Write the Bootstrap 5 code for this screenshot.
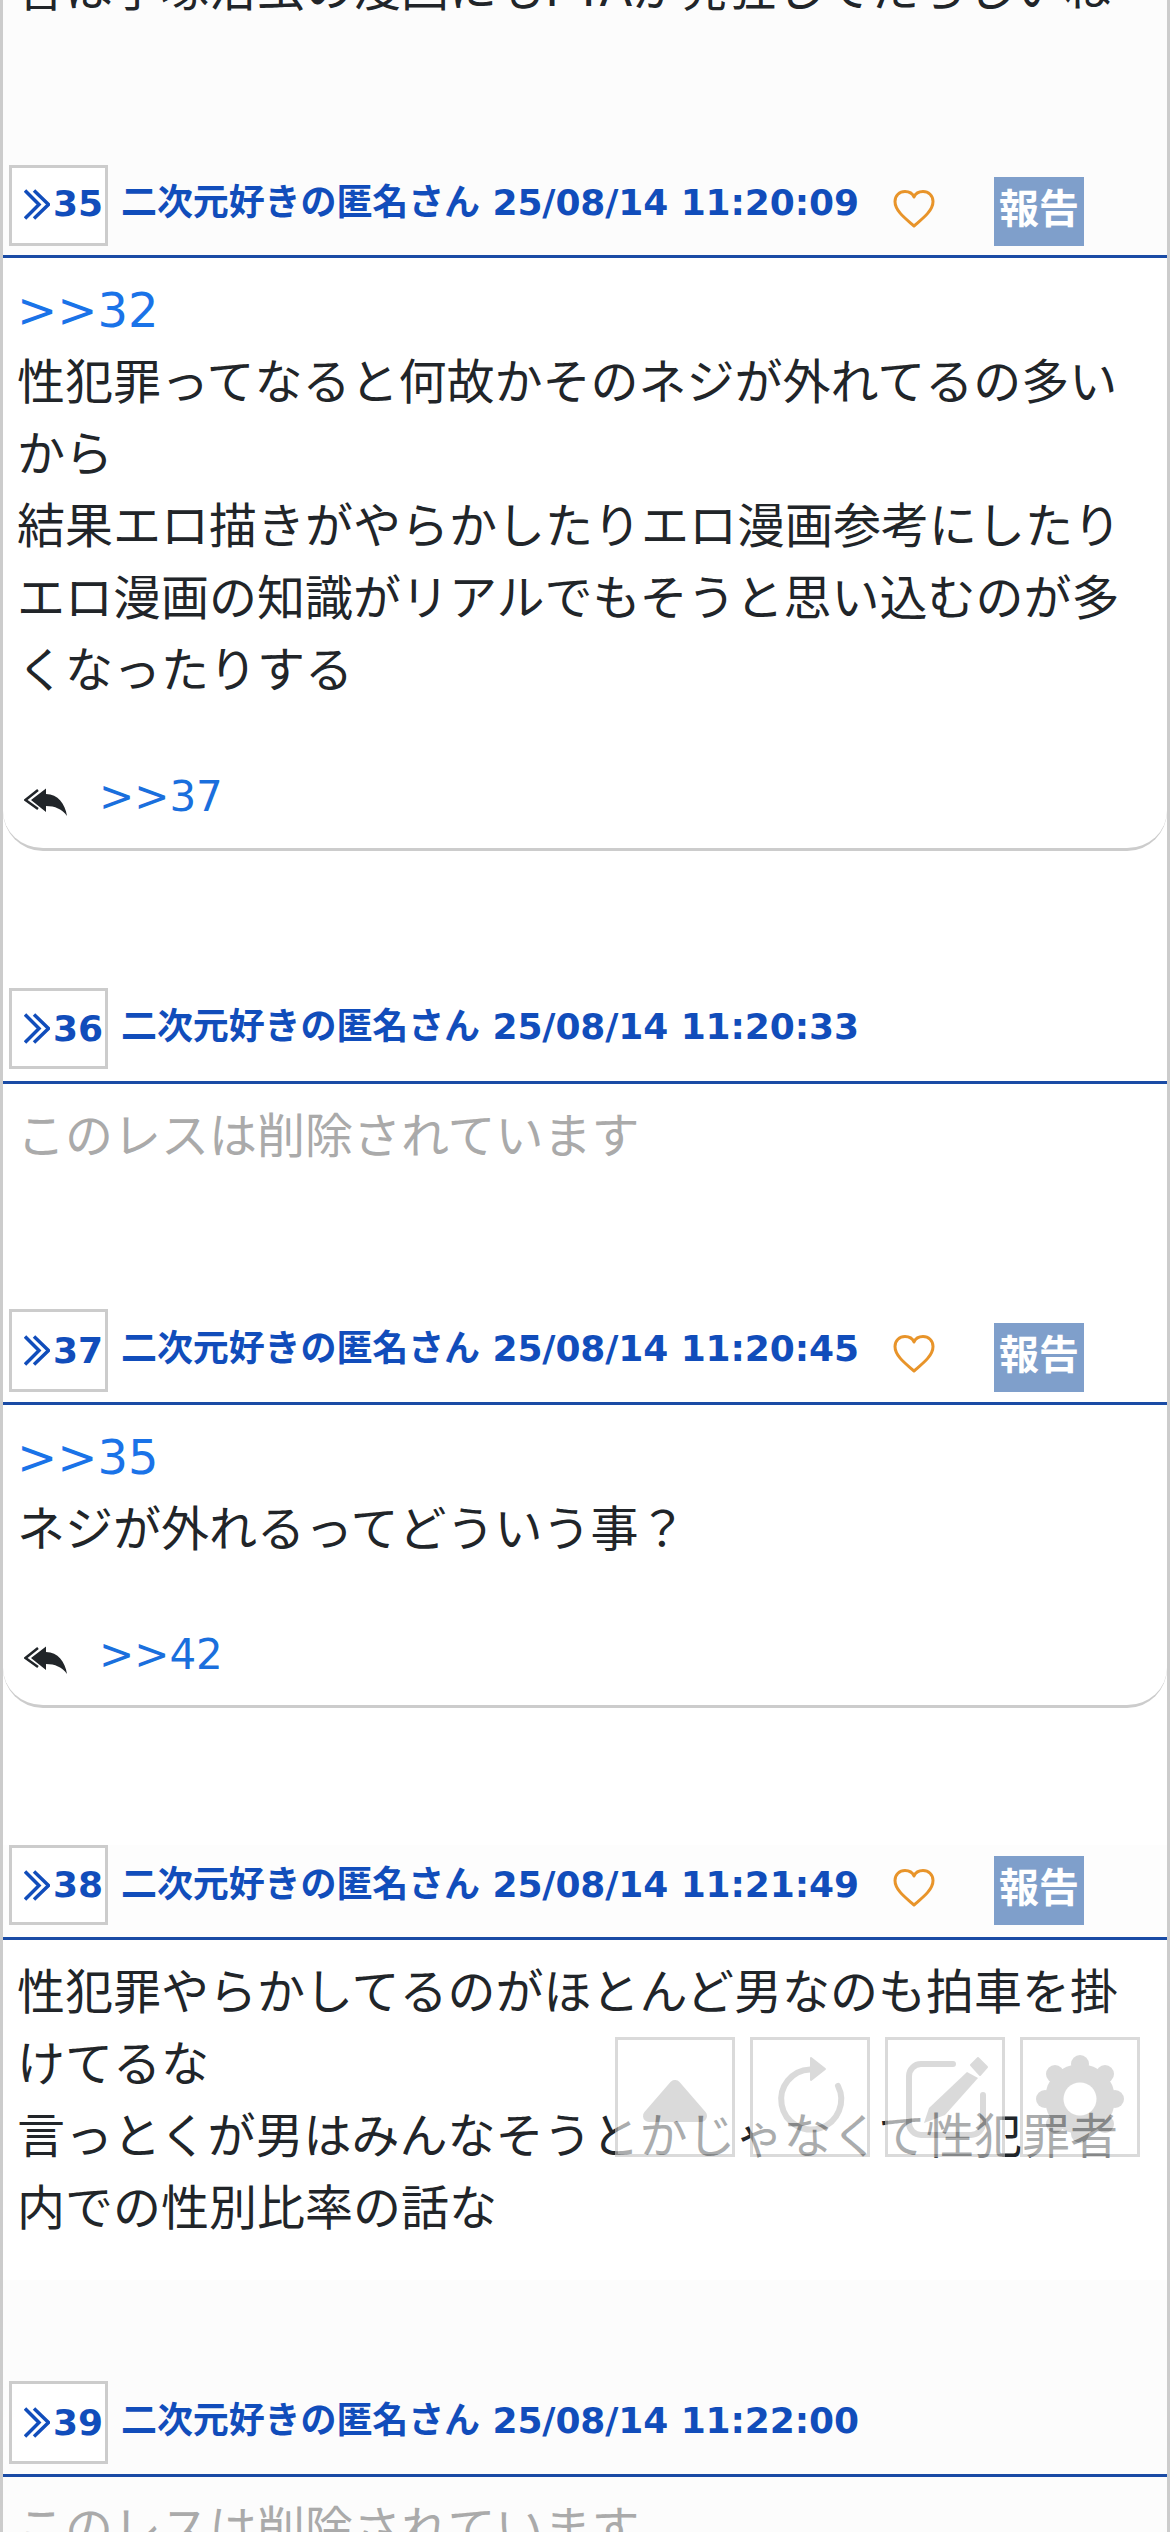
<!DOCTYPE html>
<html lang="ja">
<head>
<meta charset="utf-8">
<title>スレッド</title>
<link href="https://cdn.jsdelivr.net/npm/bootstrap@5.3.0/dist/css/bootstrap.min.css" rel="stylesheet">
<style>
html,body{height:2532px;overflow:hidden;background:#fff}
body{font-family:"DejaVu Sans","Noto Sans CJK JP",sans-serif;font-size:48px;line-height:72px;color:#212529}
.thread{border-left:3px solid #ccc;border-right:3px solid #ccc;height:2532px;overflow:hidden;background:#fff}
.lead-in{margin-top:-47px;background:#fcfcfc;height:212px;padding-left:14px}
.res-body{padding:16px 14px 0 14px}
.res-head{padding:0 6px;border-bottom:3px solid #1a4ba5;font-size:36px;line-height:54px;font-weight:700;color:#114dbb}
.tone-g{background:#fcfcfc}
.tone-f{background:#fdfdfd}
.num-box{width:99px;border:3px solid #ccc;background:#fff;white-space:nowrap;padding-left:12px;gap:3px}
.chev{flex:none}
.who{margin-left:13px;margin-top:-3px;white-space:nowrap;letter-spacing:-.1px}
.heart{margin-left:33px;margin-top:6px;flex:none}
.report{margin-left:58px;width:90px;height:69px;background:#7f9fcb;color:#fff;font-size:40px;line-height:64px;text-align:center;flex:none}
.sz-a{padding-bottom:9px}.sz-a .num-box{height:81px;padding-bottom:3px}.sz-a .who{margin-top:-5px}
.sz-b{padding-bottom:12px}.sz-b .num-box{height:81px}
.sz-c{padding-bottom:10px}.sz-c .num-box{height:83px}
.sz-d{padding-bottom:12px}.sz-d .num-box{height:80px}.sz-d .who{margin-top:0}
.res-gap{height:137px}
.res-gap-short{height:101px}
.body-long{padding-bottom:36px}
.quote{color:#1a73e8}
.deleted{color:#aaa}
.res-card{border-bottom:3px solid #ccc;border-radius:0 0 40px 40px;background:#fff}
.reply-row{font-size:42px;line-height:60px;color:#1a6fdd;padding-left:21px;gap:29px}
.reply-row svg{margin-top:11px}
.r-a{padding-top:61px;padding-bottom:21px}
.r-b{padding-top:60px;padding-bottom:20px}
.float-bar{position:fixed;right:30px;bottom:375px;gap:15px;opacity:.62}
.float-btn{width:120px;height:120px;border:3px solid #c4c4c4;background:#fff;display:block}
</style>
</head>
<body>
<div class="thread">
  <div class="lead-in">昔は手塚治虫の漫画にもPTAが発狂してたらしいね</div>

  <section>
    <div class="res-head sz-a tone-g d-flex align-items-center">
      <div class="num-box d-flex align-items-center"><svg class="chev" width="26" height="31" viewBox="0 0 26 31" aria-label="≫"><path d="M1 1.500 15 15.500 1 29.500M10 1.500 24.500 15.500 10 29.500" fill="none" stroke="#114dbb" stroke-width="3.500"/></svg>35</div>
      <div class="who">二次元好きの匿名さん 25/08/14 11:20:09</div>
      <svg class="heart" width="44" height="40" viewBox="0 0 44 40"><path d="M22 37C14 30 3 22 3 12.500C3 6.500 7.500 2.500 13 2.500C17 2.500 20.500 4.500 22 8C23.500 4.500 27 2.500 31 2.500C36.500 2.500 41 6.500 41 12.500C41 22 30 30 22 37Z" fill="none" stroke="#e8942a" stroke-width="3" stroke-linejoin="round"/></svg>
      <div class="report align-self-end">報告</div>
    </div>
    <div class="res-card">
      <div class="res-body"><span class="quote">&gt;&gt;32</span><br>性犯罪ってなると何故かそのネジが外れてるの多いから<br>結果エロ描きがやらかしたりエロ漫画参考にしたり<br>エロ漫画の知識がリアルでもそうと思い込むのが多くなったりする</div>
      <div class="reply-row r-a d-flex align-items-center">
        <svg width="46" height="30" viewBox="0 0 46 30"><path d="M14 2 1.500 12 14 21" fill="none" stroke="#212529" stroke-width="2.500"/><path d="M7 12 22 .5V6C34 6 41 16 43 28C38 21 31 18 22 18V24Z" fill="#212529"/></svg>
        <span>&gt;&gt;37</span>
      </div>
    </div>
  </section>
  <div class="res-gap"></div>

  <section>
    <div class="res-head sz-b d-flex align-items-center">
      <div class="num-box d-flex align-items-center"><svg class="chev" width="26" height="31" viewBox="0 0 26 31" aria-label="≫"><path d="M1 1.500 15 15.500 1 29.500M10 1.500 24.500 15.500 10 29.500" fill="none" stroke="#114dbb" stroke-width="3.500"/></svg>36</div>
      <div class="who">二次元好きの匿名さん 25/08/14 11:20:33</div>
    </div>
    <div class="res-body deleted">このレスは削除されています</div>
  </section>
  <div class="res-gap"></div>

  <section>
    <div class="res-head sz-c d-flex align-items-center">
      <div class="num-box d-flex align-items-center"><svg class="chev" width="26" height="31" viewBox="0 0 26 31" aria-label="≫"><path d="M1 1.500 15 15.500 1 29.500M10 1.500 24.500 15.500 10 29.500" fill="none" stroke="#114dbb" stroke-width="3.500"/></svg>37</div>
      <div class="who">二次元好きの匿名さん 25/08/14 11:20:45</div>
      <svg class="heart" width="44" height="40" viewBox="0 0 44 40"><path d="M22 37C14 30 3 22 3 12.500C3 6.500 7.500 2.500 13 2.500C17 2.500 20.500 4.500 22 8C23.500 4.500 27 2.500 31 2.500C36.500 2.500 41 6.500 41 12.500C41 22 30 30 22 37Z" fill="none" stroke="#e8942a" stroke-width="3" stroke-linejoin="round"/></svg>
      <div class="report align-self-end">報告</div>
    </div>
    <div class="res-card">
      <div class="res-body"><span class="quote">&gt;&gt;35</span><br>ネジが外れるってどういう事？</div>
      <div class="reply-row r-b d-flex align-items-center">
        <svg width="46" height="30" viewBox="0 0 46 30"><path d="M14 2 1.500 12 14 21" fill="none" stroke="#212529" stroke-width="2.500"/><path d="M7 12 22 .5V6C34 6 41 16 43 28C38 21 31 18 22 18V24Z" fill="#212529"/></svg>
        <span>&gt;&gt;42</span>
      </div>
    </div>
  </section>
  <div class="res-gap"></div>

  <section>
    <div class="res-head sz-d tone-f d-flex align-items-center">
      <div class="num-box d-flex align-items-center"><svg class="chev" width="26" height="31" viewBox="0 0 26 31" aria-label="≫"><path d="M1 1.500 15 15.500 1 29.500M10 1.500 24.500 15.500 10 29.500" fill="none" stroke="#114dbb" stroke-width="3.500"/></svg>38</div>
      <div class="who">二次元好きの匿名さん 25/08/14 11:21:49</div>
      <svg class="heart" width="44" height="40" viewBox="0 0 44 40"><path d="M22 37C14 30 3 22 3 12.500C3 6.500 7.500 2.500 13 2.500C17 2.500 20.500 4.500 22 8C23.500 4.500 27 2.500 31 2.500C36.500 2.500 41 6.500 41 12.500C41 22 30 30 22 37Z" fill="none" stroke="#e8942a" stroke-width="3" stroke-linejoin="round"/></svg>
      <div class="report align-self-end">報告</div>
    </div>
    <div class="res-body body-long">性犯罪やらかしてるのがほとんど男なのも拍車を掛けてるな<br>言っとくが男はみんなそうとかじゃなくて性犯罪者内での性別比率の話な</div>
  </section>
  <div class="res-gap-short tone-g"></div>

  <section class="tone-g">
    <div class="res-head sz-c d-flex align-items-center">
      <div class="num-box d-flex align-items-center"><svg class="chev" width="26" height="31" viewBox="0 0 26 31" aria-label="≫"><path d="M1 1.500 15 15.500 1 29.500M10 1.500 24.500 15.500 10 29.500" fill="none" stroke="#114dbb" stroke-width="3.500"/></svg>39</div>
      <div class="who">二次元好きの匿名さん 25/08/14 11:22:00</div>
    </div>
    <div class="res-body deleted">このレスは削除されています</div>
  </section>
</div>

<div class="float-bar d-flex">
  <svg class="float-btn" viewBox="0 0 114 114"><path d="M57 46 31 76H83Z" fill="#c4c4c4" stroke="#c4c4c4" stroke-width="12" stroke-linejoin="round"/></svg>
  <svg class="float-btn" viewBox="0 0 114 114"><path d="M57 29.500A30 30 0 1 0 85 46" fill="none" stroke="#c4c4c4" stroke-width="6" stroke-linecap="round"/><path d="M58 18 72 29 58 40Z" fill="#c4c4c4" stroke="#c4c4c4" stroke-width="2" stroke-linejoin="round"/></svg>
  <svg class="float-btn" viewBox="0 0 114 114"><path d="M65 24H33A12 12 0 0 0 21 36V83A12 12 0 0 0 33 95H83A12 12 0 0 0 95 83V55" fill="none" stroke="#c4c4c4" stroke-width="6" stroke-linecap="round"/><path d="M36 83 41 68 79 32 90 38 57 75Z" fill="#c4c4c4"/><path d="M83 25 90 18 99 27 92 35Z" fill="#c4c4c4" stroke="#c4c4c4" stroke-width="2" stroke-linejoin="round"/></svg>
  <svg class="float-btn" viewBox="0 0 114 114"><g fill="#c4c4c4"><circle cx="57" cy="59" r="35"/><circle cx="57" cy="24" r="9"/><circle cx="82" cy="34" r="9"/><circle cx="92" cy="59" r="9"/><circle cx="82" cy="84" r="9"/><circle cx="57" cy="94" r="9"/><circle cx="32" cy="84" r="9"/><circle cx="22" cy="59" r="9"/><circle cx="32" cy="34" r="9"/></g><circle cx="57" cy="59" r="16.500" fill="#fff"/></svg>
</div>
<script src="https://cdn.jsdelivr.net/npm/bootstrap@5.3.0/dist/js/bootstrap.bundle.min.js"></script>
</body>
</html>
